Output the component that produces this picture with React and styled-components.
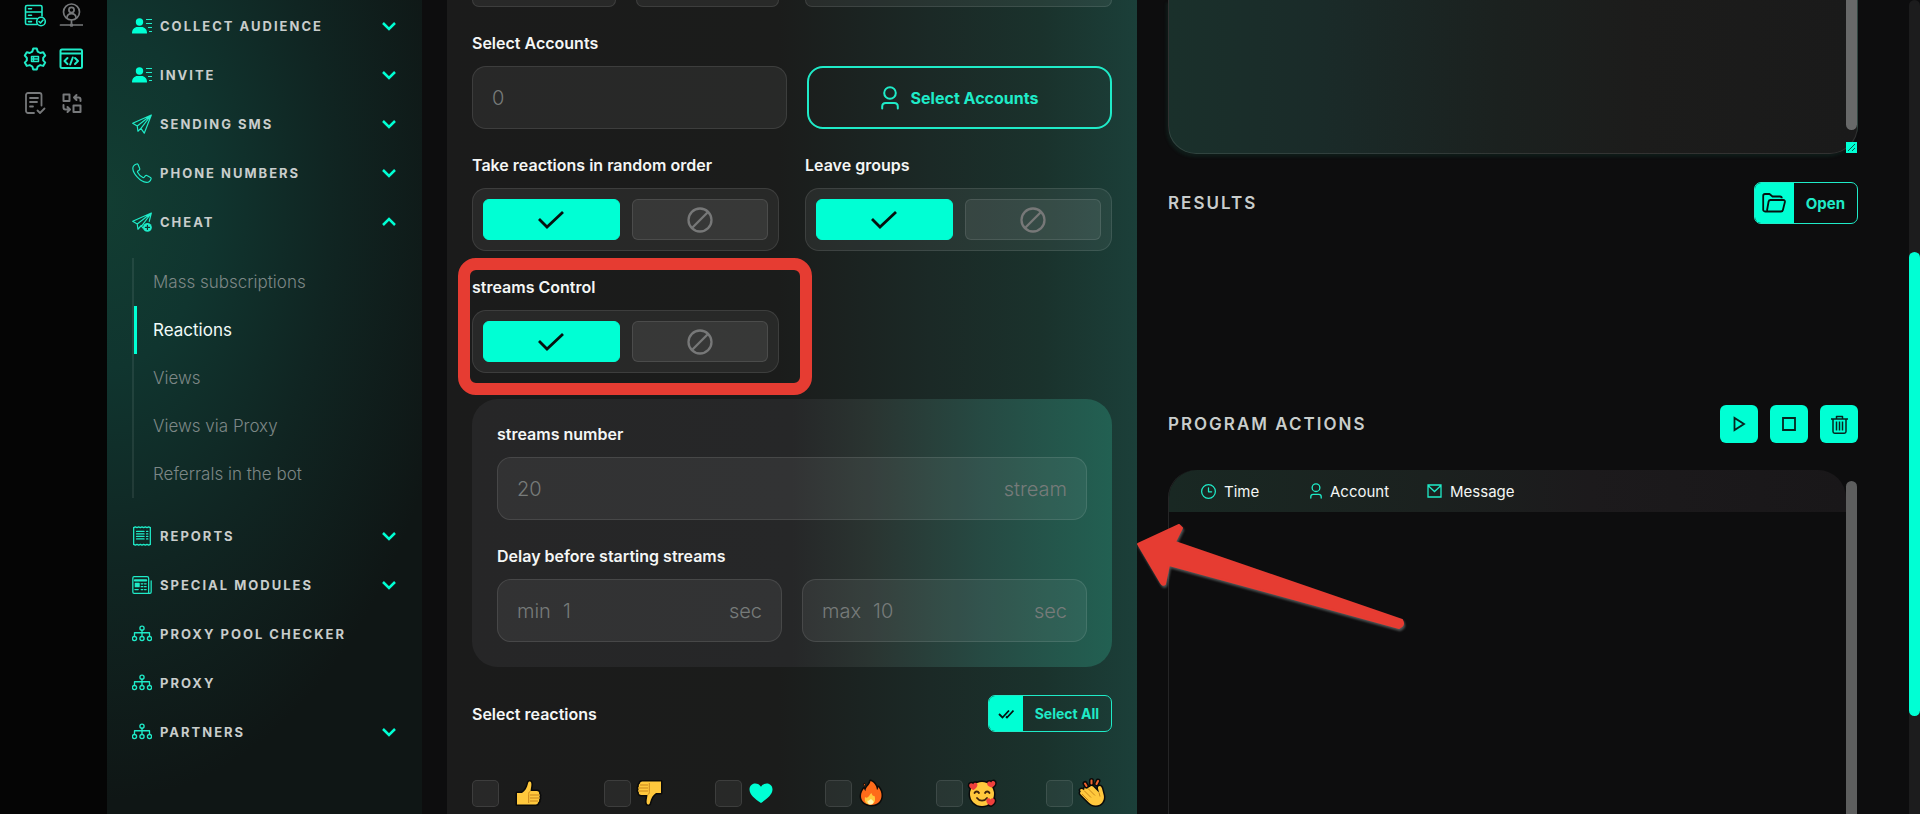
import styled, { createGlobalStyle, ThemeProvider } from 'styled-components';

const theme = {
  colors: {
    page: '#0d0d0e',
    rail: '#050505',
    accent: '#00ffd4',
    accentLine: '#1febc8',
    text: '#f4f6f5',
    heading: '#c9cdcc',
    muted: '#777b7a',
    mark: '#e63c32',
    line: 'rgba(255, 255, 255, 0.1)',
    field: 'rgba(255, 255, 255, 0.06)',
  },
};

const GlobalStyle = createGlobalStyle`
  *, *::before, *::after { box-sizing: border-box; }

  body {
    margin: 0;
    overflow: hidden;
    background: ${theme.colors.page};
    color: ${theme.colors.text};
    font-family: Inter, 'Liberation Sans', sans-serif;
    font-size: 16px;
  }

  button, input, textarea { font: inherit; color: inherit; margin: 0; }
  a { color: inherit; text-decoration: none; }
  svg { display: block; flex: none; }
`;

const Page = styled.div`
  display: grid;
  grid-template-columns: 107px 315px minmax(0, 1fr) 11px;
  height: 100vh;
  overflow: hidden;
`;

/* Icon rail */

const Rail = styled.nav`
  display: grid;
  grid-template-columns: 24px 24px;
  grid-auto-rows: 24px;
  gap: 20px 12px;
  padding: 3px 0 0 23px;
  background: ${({ theme }) => theme.colors.rail};
`;

const RailLink = styled.a`
  color: ${({ theme, $active }) => ($active ? theme.colors.accentLine : '#77797b')};
`;

/* Sidebar */

const Sidebar = styled.nav`
  overflow: hidden;
  padding: 1px 25px 0;
  background: radial-gradient(ellipse 360px 600px at 0 200px, #123d32 0%, #10352f 28%, #102522 62%, #0f1615 100%);
`;

const MenuItem = styled.a`
  display: flex;
  align-items: center;
  gap: 8px;
  height: 49px;
  color: ${({ theme }) => theme.colors.heading};
  font-size: 13px;
  font-weight: 700;
  letter-spacing: 2px;
  text-transform: uppercase;

  svg { color: ${({ theme }) => theme.colors.accentLine}; }
  svg:last-child { margin-left: auto; margin-right: 1px; }
`;

const SubMenu = styled.div`
  margin: 12px 0 13px;
  border-left: 2px solid rgba(255, 255, 255, 0.08);
`;

const SubItem = styled.a`
  display: flex;
  align-items: center;
  height: 48px;
  padding-left: 16px;
  border-left: 3px solid ${({ theme, $active }) => ($active ? theme.colors.accent : 'transparent')};
  color: ${({ $active }) => ($active ? '#f2fbf9' : '#7d8786')};
  font-size: 17px;
  font-weight: ${({ $active }) => ($active ? 400 : 300)};
`;

/* Working area */

const Workspace = styled.main`
  display: grid;
  grid-template-columns: minmax(0, 1fr) minmax(0, 1fr);
  gap: 31px;
  min-height: 0;
  padding: 0 51px 0 25px;
`;

const Settings = styled.form`
  min-width: 0;
  padding: 0 25px;
  background: linear-gradient(90deg, #1b1b1b 0%, #1b1c1b 48%, #1b2926 70%, #1a322c 86%, #1b3f39 100%);
`;

const Row = styled.div`
  display: grid;
  grid-template-columns: ${({ $columns }) => $columns};
  gap: ${({ $gap }) => $gap}px;
  align-items: end;
  margin-bottom: 26px;

  &:last-child { margin-bottom: 0; }
`;

const CutPair = styled.div`
  display: grid;
  grid-template-columns: 1fr 1fr;
  gap: 20px;
`;

const CutBox = styled.div`
  height: 7px;
  border: 1px solid ${({ theme }) => theme.colors.line};
  border-top: 0;
  border-radius: 0 0 14px 14px;
  background: ${({ theme }) => theme.colors.field};
`;

const Field = styled.div`
  display: grid;
  gap: 13px;
  min-width: 0;
`;

const Label = styled.label`
  font-size: 16px;
  font-weight: 600;
  line-height: 20px;
`;

const InputBox = styled.div`
  display: flex;
  align-items: center;
  gap: 12px;
  height: 63px;
  padding: 0 19px;
  border: 1px solid ${({ theme }) => theme.colors.line};
  border-radius: 14px;
  background: ${({ theme }) => theme.colors.field};
  color: ${({ theme }) => theme.colors.muted};
  font-size: 20px;
  font-weight: 300;
`;

const Input = styled.input`
  flex: 1;
  width: 0;
  min-width: 0;
  padding: 0;
  border: 0;
  outline: 0;
  background: none;
`;

const OutlineButton = styled.button`
  display: flex;
  align-items: center;
  justify-content: center;
  gap: 12px;
  height: 63px;
  border: 2px solid ${({ theme }) => theme.colors.accentLine};
  border-radius: 16px;
  background: none;
  color: ${({ theme }) => theme.colors.accentLine};
  font-size: 16px;
  font-weight: 700;
`;

const Switch = styled.div`
  display: grid;
  grid-template-columns: 1fr 1fr;
  gap: 12px;
  height: 63px;
  padding: 10px;
  border: 1px solid ${({ theme }) => theme.colors.line};
  border-radius: 14px;
  background: ${({ theme }) => theme.colors.field};
`;

const Option = styled.label`
  display: grid;
  place-items: center;
  color: #777878;

  > * { grid-area: 1 / 1; }

  input {
    width: 100%;
    height: 100%;
    appearance: none;
    border: 1px solid ${({ theme }) => theme.colors.line};
    border-radius: 6px;
    background: rgba(255, 255, 255, 0.07);
  }

  input:checked {
    border-color: ${({ theme }) => theme.colors.accent};
    background: ${({ theme }) => theme.colors.accent};
  }

  input:checked + svg { color: #06110f; }
`;

const Highlight = styled.div`
  position: relative;

  &::after {
    content: '';
    position: absolute;
    inset: -19px -33px -22px -14px;
    border: 12px solid ${({ theme }) => theme.colors.mark};
    border-radius: 18px;
    pointer-events: none;
  }
`;

const StreamCard = styled.section`
  padding: 25px;
  border-radius: 26px;
  background: linear-gradient(90deg, #262627 0%, #262728 50%, #2a3431 62%, #264a43 80%, #226052 100%);
`;

const ListHead = styled.div`
  display: flex;
  align-items: center;
  justify-content: space-between;
  margin: 28px 0 46px;
`;

const SplitButton = styled.button`
  display: flex;
  align-items: stretch;
  height: ${({ $large }) => ($large ? 42 : 37)}px;
  padding: 0;
  overflow: hidden;
  border: 1px solid ${({ theme }) => theme.colors.accentLine};
  border-radius: 7px;
  background: none;
  color: ${({ theme }) => theme.colors.accentLine};
  font-size: ${({ $large }) => ($large ? 15 : 14)}px;
  font-weight: 700;

  span { padding: 0 12px; align-self: center; }
`;

const SplitIcon = styled.i`
  display: grid;
  place-items: center;
  width: ${({ $large }) => ($large ? 39 : 34)}px;
  background: ${({ theme }) => theme.colors.accent};
  color: #06110f;
`;

const Reactions = styled.div`
  display: flex;
  justify-content: space-between;
`;

const Reaction = styled.label`
  display: flex;
  align-items: center;
  gap: ${({ $wide }) => ($wide ? 13 : 3)}px;
  width: ${({ $wide }) => ($wide ? 88 : 66)}px;
`;

const Checkbox = styled.input`
  width: 27px;
  height: 27px;
  appearance: none;
  border: 1px solid ${({ theme }) => theme.colors.line};
  border-radius: 5px;
  background: ${({ theme }) => theme.colors.field};
`;

/* Output column */

const Output = styled.div`
  display: flex;
  flex-direction: column;
  min-width: 0;
  min-height: 0;
`;

const Console = styled.div`
  position: relative;
  height: 154px;
`;

const ConsoleText = styled.textarea`
  display: block;
  width: 100%;
  height: 100%;
  resize: none;
  outline: 0;
  border: 1px solid ${({ theme }) => theme.colors.line};
  border-top: 0;
  border-radius: 0 0 28px 28px;
  background: linear-gradient(90deg, #1a302b 0%, #1a2b29 22%, #1b211f 48%, #1c1c1b 68%, #1a1a1a 100%);
  box-shadow: -2px 3px 3px rgba(20, 60, 50, 0.3);
`;

const ConsoleThumb = styled.div`
  position: absolute;
  top: 0;
  right: 1px;
  width: 11px;
  height: 130px;
  border-radius: 0 0 6px 6px;
  background: #686969;
`;

const Resizer = styled.div`
  position: absolute;
  right: 1px;
  bottom: 1px;
  display: grid;
  place-items: center;
  width: 11px;
  height: 11px;
  background: ${({ theme }) => theme.colors.accent};
  color: #0a5a4c;
`;

const SectionHead = styled.header`
  display: flex;
  align-items: center;
  justify-content: space-between;
  height: 42px;
  margin-top: ${({ $top }) => $top}px;
`;

const Title = styled.h2`
  margin: 0;
  color: ${({ theme }) => theme.colors.heading};
  font-size: 17px;
  font-weight: 600;
  letter-spacing: 2px;
  text-transform: uppercase;
`;

const Tools = styled.div`
  display: flex;
  gap: 12px;
`;

const ToolButton = styled.button`
  display: grid;
  place-items: center;
  width: 38px;
  height: 38px;
  padding: 0;
  border: 0;
  border-radius: 6px;
  background: ${({ theme }) => theme.colors.accent};
  color: #06251f;
`;

const Log = styled.div`
  display: flex;
  flex: 1;
  align-items: flex-start;
  margin-top: 25px;
  border-left: 1px solid ${({ theme }) => theme.colors.line};
  border-radius: 28px 0 0 0;
`;

const Table = styled.table`
  flex: 1;
  overflow: hidden;
  border-collapse: collapse;
  border-radius: 28px 28px 0 0;
  background: linear-gradient(90deg, #192823 0%, #1b211f 38%, #1c1a1c 62%, #191719 100%);
`;

const HeadCell = styled.th`
  width: ${({ $width }) => ($width ? `${$width}px` : 'auto')};
  height: 42px;
  padding: 0 0 0 ${({ $inset }) => ($inset ? 32 : 0)}px;
  font-size: 15px;
  font-weight: 400;

  > span {
    display: flex;
    align-items: center;
    gap: 8px;
  }

  svg { color: ${({ theme }) => theme.colors.accentLine}; }
`;

const LogThumb = styled.div`
  align-self: stretch;
  width: 11px;
  margin: 11px 1px 0 0;
  border-radius: 6px 6px 0 0;
  background: #5d5e5e;
`;

const PageTrack = styled.div`
  border-radius: 6px 6px 0 0;
  background: #1c1c1d;
`;

const PageThumb = styled.div`
  height: 57vh;
  margin-top: 31vh;
  border-radius: 6px;
  background: ${({ theme }) => theme.colors.accent};
`;

const PointerAnchor = styled.div`
  position: relative;
`;

const Pointer = styled.svg`
  position: absolute;
  top: 125px;
  left: 665px;
  filter: drop-shadow(1px 2px 1px rgba(150, 160, 160, 0.5));
`;

/* Icons */

const Line = ({ size = 20, width = 1.6, children }) => (
  <svg
    width={size}
    height={size}
    viewBox="0 0 24 24"
    fill="none"
    stroke="currentColor"
    strokeWidth={width}
    strokeLinecap="round"
    strokeLinejoin="round"
    aria-hidden="true"
  >
    {children}
  </svg>
);

const ServerIcon = () => (
  <Line size={24}>
    <path d="M14 21.5H4A1.5 1.5 0 0 1 2.5 20V4A1.5 1.5 0 0 1 4 2.5h13.500A1.5 1.5 0 0 1 19 4v9M2.5 9H19M2.5 15.500H14M5.500 5.800h3M5.500 12.200h3M5.500 18.600h3" />
    <circle cx="18" cy="18.5" r="4.3" />
    <path d="m16 18.500 1.500 1.500 2.600-3" />
  </Line>
);

const UserNodeIcon = () => (
  <Line size={24} width={1.7}>
    <circle cx="12.5" cy="9" r="8" />
    <circle cx="12.5" cy="7" r="2.6" />
    <path d="M8 14.500c.3-2.600 2-3.800 4.500-3.800s4.200 1.200 4.500 3.800M12.500 17v3M1.500 22h9M14.500 22H24" />
    <circle cx="12.5" cy="22" r="1" />
  </Line>
);

const GearIcon = () => (
  <Line size={24} width={2}>
    <path d="M10.200 1.600h3.600l.9 3 2.500 1.400 3-.8 2 3.300-2 2.300v2.600l2 2.200-2 3.300-3-.8-2.500 1.400-.9 3h-3.600l-.9-3-2.500-1.400-3 .8-2-3.300 2-2.200v-2.600l-2-2.300 2-3.300 3 .8L9.300 4.600z" />
    <path d="M8.500 9.500h7v5h-7zM8.500 12h7M10.500 9.500v5" strokeWidth="1.5" />
  </Line>
);

const CodeIcon = () => (
  <Line size={24} width={2}>
    <rect x="1.500" y="2.500" width="21.500" height="18.500" rx="1.500" />
    <path d="M2 6.500h21M8.500 11l-3 3 3 3M16 11l3 3-3 3M13.800 10.500l-2.600 7" />
  </Line>
);

const NoteCheckIcon = () => (
  <Line size={24} width={1.8}>
    <path d="M11 22H5a2 2 0 0 1-2-2V4a2 2 0 0 1 2-2h11.500a2 2 0 0 1 2 2v10.500M7 7h8M7 11h7M7 15.500h3M14.500 19.500l2.500 2.500 4.500-4.500" />
  </Line>
);

const SwapIcon = () => (
  <Line size={24} width={2}>
    <path d="M4.500 3.500h6v6.500h-6zM14.500 14.500h7V21h-7zM21.500 10V8.500a2 2 0 0 0-2-2H15M17.500 4 15 6.500 17.500 9M4.500 14v2.500a2 2 0 0 0 2 2h4M8.500 16l2.500 2.500L8.500 21" />
  </Line>
);

const AudienceIcon = () => (
  <svg width="20" height="20" viewBox="0 0 20 20" fill="currentColor" aria-hidden="true">
    <circle cx="7.5" cy="6" r="3.7" fill="#00ffd4" />
    <path d="M0 17c0-3.500 2.500-6 5.500-6h4c3 0 5.500 2.500 5.500 6 0 .4-.2.6-.6.6H.6c-.4 0-.6-.2-.6-.6z" fill="#00ffd4" />
    <path d="M14 3h6v1h-6zM14 7h6v1h-6zM16 11h4v1h-4zM17 15h3v1h-3z" />
  </svg>
);

const SendIcon = () => (
  <Line width={1.4}>
    <path d="M23.200 1.200.8 11.200l5.500 3.300zM23.200 1.200 6.300 14.500l.8 6.200 3.600-3.500zM23.200 1.200 10.700 17.200l4 5.800z" />
  </Line>
);

const SendPlusIcon = () => (
  <Line width={1.4}>
    <path d="M23.200 1.200.8 11.200l5.500 3.300zM23.200 1.200 6.300 14.500l.8 6.200 4-4.500M23.200 1.200l-2.500 10M23.200 1.200 11.500 17l1.500 2" />
    <circle cx="18.5" cy="18.5" r="5.3" fill="currentColor" stroke="none" />
    <path d="M18.500 16v5M16 18.500h5" stroke="#10332d" />
  </Line>
);

const PhoneIcon = () => (
  <Line width={1.4}>
    <path d="M5.500 1.200c-2.500.8-4.500 2.600-4.500 5.300C1.200 12 9 22.500 17.500 23.200c2.500 0 4.700-1.700 5.400-4.200.2-.7-.1-1.300-.7-1.700l-4.300-2.200c-.7-.4-1.500-.2-2 .4l-1.200 1.600c-.4.5-1 .7-1.600.4-2.700-1.300-5-3.600-6.400-6.300-.3-.6-.1-1.200.4-1.600l1.600-1.200c.6-.5.8-1.300.4-2L7.300 1.800c-.4-.6-1.100-.9-1.800-.6z" />
  </Line>
);

const ReportIcon = () => (
  <Line width={1.5}>
    <path d="M2 2v20M22 2v20" />
    <path d="m2 2 2-1 2 1 2-1 2 1 2-1 2 1 2-1 2 1 2-1 2 1M2 22l2 1 2-1 2 1 2-1 2 1 2-1 2 1 2-1 2 1 2-1" />
    <path d="M5.500 6.500h9M5.500 9.500h9M5.500 12.500h9M5.500 15.500h9M17.500 6.500H19M17.500 9.500H19M17.500 12.500H19M17.500 15.500H19" />
  </Line>
);

const NewsIcon = () => (
  <Line width={1.5}>
    <path d="M20 22H2.500A1.500 1.500 0 0 1 1 20.500v-17A1.500 1.500 0 0 1 2.500 2H18a2 2 0 0 1 2 2zM20 22h1.500a1.500 1.500 0 0 0 1.500-1.500V7" />
    <path d="M3.500 6.500H17" strokeWidth="2.6" />
    <path d="M4 10h4.500v4H4z" fill="currentColor" />
    <path d="M11 10.500h2M15 10.500h2M11 14h2M15 14h2M3.500 17.500h4M11 17.500h2M15 17.500h2" />
  </Line>
);

const TreeIcon = () => (
  <Line>
    <circle cx="12" cy="5" r="2.5" />
    <circle cx="3" cy="17.5" r="2.5" />
    <circle cx="12" cy="17.5" r="2.5" />
    <circle cx="21" cy="17.5" r="2.5" />
    <path d="M12 7.500V15M3 14v-3.500h18V14" />
  </Line>
);

const Chevron = ({ up }) => (
  <svg width="14" height="10" viewBox="0 0 14 10" fill="none" stroke="#00ffd4" strokeWidth="2.5" aria-hidden="true">
    <path d={up ? 'm1 8 6-6 6 6' : 'm1 2 6 6 6-6'} />
  </svg>
);

const PersonIcon = ({ width, height }) => (
  <svg width={width} height={height} viewBox="0 0 18 24" fill="none" stroke="currentColor" strokeWidth="2" strokeLinecap="round" aria-hidden="true">
    <circle cx="9" cy="7" r="5.8" />
    <path d="M1.200 22.500V20.500c0-2 1.500-3.500 3.500-3.500h8.600c2 0 3.500 1.500 3.500 3.500v2" />
  </svg>
);

const CheckIcon = () => (
  <svg width="26" height="20" viewBox="0 0 26 20" fill="none" stroke="currentColor" strokeWidth="2.8" aria-hidden="true">
    <path d="m1 9 8 8L25 2" />
  </svg>
);

const BanIcon = () => (
  <svg width="26" height="26" viewBox="0 0 26 26" fill="none" stroke="currentColor" strokeWidth="2.3" aria-hidden="true">
    <circle cx="13" cy="13" r="11.5" />
    <path d="M21 5 5 21" />
  </svg>
);

const DoubleCheckIcon = () => (
  <svg width="16" height="10" viewBox="0 0 16 10" fill="none" stroke="currentColor" strokeWidth="1.8" aria-hidden="true">
    <path d="m1 5 3.500 3.500L11 1.500M8 7.500l1 1 6.500-7" />
  </svg>
);

const FolderIcon = () => (
  <svg width="24" height="20" viewBox="0 0 24 20" fill="none" stroke="currentColor" strokeWidth="1.8" strokeLinejoin="round" aria-hidden="true">
    <path d="M4 18.500H3a1.800 1.800 0 0 1-1.800-1.800V2.800C1.200 1.800 2 1 3 1h4.500l3 2.500H18c1 0 1.800.8 1.800 1.800M4 18.500h15c1 0 1.700-.6 1.900-1.500l2-8c.2-1-.5-2-1.600-2H8.500c-.9 0-1.700.6-1.900 1.500L5 17.500c-.2.6-.5 1-1 1z" />
  </svg>
);

const PlayIcon = () => (
  <svg width="14" height="16" viewBox="0 0 14 16" fill="none" stroke="currentColor" strokeWidth="1.8" aria-hidden="true">
    <path d="M2.500 2v12L12 8z" />
  </svg>
);

const StopIcon = () => (
  <svg width="14" height="14" viewBox="0 0 14 14" fill="none" stroke="currentColor" strokeWidth="1.8" aria-hidden="true">
    <path d="M1 1h12v12H1z" />
  </svg>
);

const TrashIcon = () => (
  <svg width="17" height="19" viewBox="0 0 17 19" fill="none" stroke="currentColor" strokeWidth="1.5" strokeLinejoin="round" aria-hidden="true">
    <path d="M0 4h17M5.500 4V1.500h6V4M2 4v12.500c0 1 .6 1.700 1.700 1.700h9.600c1.100 0 1.700-.7 1.700-1.700V4M5.500 6.500v9M8.500 6.500v9M11.500 6.500v9" />
  </svg>
);

const ClockIcon = () => (
  <Line size={15} width={2}>
    <circle cx="12" cy="12" r="11" />
    <path d="M12 6v6.500h5" />
  </Line>
);

const MailIcon = () => (
  <svg width="15" height="14" viewBox="0 0 15 14" fill="none" stroke="currentColor" strokeWidth="1.3" aria-hidden="true">
    <path d="M1 1h13v12H1zM1 1.500l6.500 6L14 1.500" />
  </svg>
);

/* Reaction faces */

const Face = ({ back, children }) => (
  <svg width="32" height="30" viewBox="0 0 32 30" aria-hidden="true">
    {back && <path d={back} fill="#0a0a0a" stroke="#0a0a0a" strokeWidth="3" strokeLinejoin="round" />}
    {children}
  </svg>
);

const THUMB = 'M5 15h5c3-2 5-5 6-9.500.3-1.500.8-2 1.700-2 1.500 0 2 2 1.600 4.500L18.500 13h6c2 0 3 1.300 2.600 2.800.8.700 1 2 .2 3 .7 1 .6 2.200-.3 3 .4 1 0 2.200-1 2.700 0 1.300-1 2-2.300 2H5z';

const ThumbUp = () => (
  <Face back={THUMB}>
    <path d={THUMB} fill="#ffc83d" />
    <path d="M18.500 13c-1.500 1-2 2-1.800 3.500V25M18 17h9M18 20h9M18 23h8" fill="none" stroke="#c9861c" />
  </Face>
);

const ThumbDown = () => (
  <Face>
    <g transform="rotate(180 16 15)">
      <path d={THUMB} fill="#0a0a0a" stroke="#0a0a0a" strokeWidth="3" strokeLinejoin="round" />
      <path d={THUMB} fill="#ffc83d" />
      <path d="M18.500 13c-1.500 1-2 2-1.800 3.500V25M18 17h9M18 20h9M18 23h8" fill="none" stroke="#c9861c" />
    </g>
  </Face>
);

const Heart = () => (
  <Face>
    <path d="M16 25C10 21 4.500 16.500 4.500 11.500c0-3.500 2.500-6 5.700-6 2.400 0 4.600 1.200 5.800 3.300 1.200-2.100 3.400-3.300 5.800-3.300 3.200 0 5.700 2.500 5.700 6C27.500 16.500 22 21 16 25z" fill="#00ffd4" />
  </Face>
);

const FIRE = 'M15.500 3c5 2 6 6 6.500 9 .8-.7 1.200-1.600 1.200-3 2.600 3 3.500 6 3.300 9-.3 5.500-4.300 9-10 9S6 23.500 6 18c0-3.500 1.500-5.500 3-7.500.4 1.200.8 2 1.500 2.500C10.500 8.500 15 7.500 15.500 3z';

const Fire = () => (
  <Face back={FIRE}>
    <path d="M9 5c1.500 1 2 2 1 3.500C8.500 7.500 8.300 6.500 9 5z" fill="#ff6a1c" stroke="#0a0a0a" />
    <path d={FIRE} fill="#ff6b1a" />
    <path d="M10 19c1 1 2 1 3 0 1.500-1 1.500-2.500 3.500-4 .5 2 1.500 3.500 3 3 1.500 4 0 8.500-4 8.500S9 24 10 19z" fill="#ffc83d" />
    <path d="M12.500 22.500c1.500.5 2-.5 3.500-1.500 1.500 1.500 3 2 2.500 3.500-.5 1.200-1.500 2-3 2s-3.500-1.500-3-4z" fill="#fff3b0" />
  </Face>
);

const LOVE_HEARTS = 'M7.500 12C4 10.500 2.500 8 3.500 6.200c1-1.500 2.800-1.300 3.700 0 .7-1.500 2.700-1.900 3.800-.6C12.300 7.300 10.500 10.500 7.500 12zM25.500 9.500c-3.500-1-5-3-4-5 .9-1.500 2.800-1.400 3.700-.1.700-1.400 2.600-1.800 3.700-.5 1.200 1.700-.4 4.300-3.400 5.600zM25 27.500c-4-1-5.500-4-4.200-6.200 1-1.500 2.900-1.200 3.700.3.900-1.500 2.800-1.800 3.900-.4 1.300 2-.4 5-3.400 6.300z';

const Love = () => (
  <Face back={LOVE_HEARTS}>
    <circle cx="16" cy="16" r="13.5" fill="#0a0a0a" />
    <circle cx="16" cy="16" r="12" fill="#ffc83d" />
    <path d="M8.500 15c1-2 3.500-2 4.500 0M19 15c1-2 3.500-2 4.500 0M11 20c2.500 3.500 7.500 3.500 10 0" fill="none" stroke="#40240c" strokeWidth="1.8" strokeLinecap="round" />
    <path d={LOVE_HEARTS} fill="#f0403c" />
  </Face>
);

const CLAP = 'M4 12c1-1.500 2.500-1 3.500 0l1-.8C8 9 10 8 11.500 9.500L14 9c.5-1 2-1.500 3-.5l6 6-1-4c-.3-1.500.5-2.500 1.500-2.500 1.200 0 2 .8 2.500 2.500l1.800 7c1 5-2.500 10-8 10-3 0-5-1-7-3l-8-8c-1-1-1-2 0-3z';

const Clap = () => (
  <Face back={CLAP}>
    <path d={CLAP} fill="#ffc83d" />
    <path d="m8 12.500 7 7M6 16l6.500 6.500M12 10.500l7 7M23 14.500l1 4" fill="none" stroke="#c9861c" />
    <path d="M9 5.500 10.500 8M15.500 2.500v3M22 3l-1.500 3" stroke="#0a0a0a" strokeWidth="5" strokeLinecap="round" />
    <path d="M9 5.500 10.500 8M15.500 2.500v3M22 3l-1.500 3" stroke="#f2622c" strokeWidth="2" strokeLinecap="round" />
  </Face>
);

/* Data */

const railIcons = [
  { name: 'Servers', icon: ServerIcon, active: true },
  { name: 'Account node', icon: UserNodeIcon },
  { name: 'Settings', icon: GearIcon, active: true },
  { name: 'Code', icon: CodeIcon, active: true },
  { name: 'Tasks', icon: NoteCheckIcon },
  { name: 'Exchange', icon: SwapIcon },
];

const menu = [
  { name: 'Collect audience', icon: AudienceIcon, more: true },
  { name: 'Invite', icon: AudienceIcon, more: true },
  { name: 'Sending SMS', icon: SendIcon, more: true },
  { name: 'Phone numbers', icon: PhoneIcon, more: true },
  { name: 'Cheat', icon: SendPlusIcon, more: true, open: true },
];

const cheatItems = ['Mass subscriptions', 'Reactions', 'Views', 'Views via Proxy', 'Referrals in the bot'];

const menuRest = [
  { name: 'Reports', icon: ReportIcon, more: true },
  { name: 'Special modules', icon: NewsIcon, more: true },
  { name: 'Proxy pool checker', icon: TreeIcon },
  { name: 'Proxy', icon: TreeIcon },
  { name: 'Partners', icon: TreeIcon, more: true },
];

const reactions = [
  { name: 'Thumbs up', face: ThumbUp },
  { name: 'Thumbs down', face: ThumbDown },
  { name: 'Heart', face: Heart },
  { name: 'Fire', face: Fire },
  { name: 'Love', face: Love },
  { name: 'Clap', face: Clap },
];

const MenuGroup = ({ items }) =>
  items.map(({ name, icon: Icon, more, open }) => (
    <MenuItem href="#" key={name}>
      <Icon />
      <span>{name}</span>
      {more && <Chevron up={open} />}
    </MenuItem>
  ));

const Toggle = ({ id, label }) => (
  <Field role="radiogroup" aria-labelledby={id}>
    <Label as="span" id={id}>{label}</Label>
    <Switch>
      <Option>
        <input type="radio" name={id} aria-label="On" defaultChecked />
        <CheckIcon />
      </Option>
      <Option>
        <input type="radio" name={id} aria-label="Off" />
        <BanIcon />
      </Option>
    </Switch>
  </Field>
);

export default function App() {
  return (
    <ThemeProvider theme={theme}>
      <GlobalStyle />
      <Page>
        <Rail>
          {railIcons.map(({ name, icon: Icon, active }) => (
            <RailLink href="#" key={name} aria-label={name} $active={active}>
              <Icon />
            </RailLink>
          ))}
        </Rail>

        <Sidebar>
          <MenuGroup items={menu} />
          <SubMenu>
            {cheatItems.map((name) => (
              <SubItem href="#" key={name} $active={name === 'Reactions'}>{name}</SubItem>
            ))}
          </SubMenu>
          <MenuGroup items={menuRest} />
        </Sidebar>

        <Workspace>
          <Settings>
            <Row $columns="1fr 1fr" $gap={26}>
              <CutPair>
                <CutBox />
                <CutBox />
              </CutPair>
              <CutBox />
            </Row>

            <Row $columns="315fr 305fr" $gap={20}>
              <Field>
                <Label htmlFor="accounts">Select Accounts</Label>
                <InputBox>
                  <Input id="accounts" defaultValue="0" />
                </InputBox>
              </Field>
              <OutlineButton type="button">
                <PersonIcon width={18} height={24} />
                Select Accounts
              </OutlineButton>
            </Row>

            <Row $columns="1fr 1fr" $gap={26}>
              <Toggle id="random-order" label="Take reactions in random order" />
              <Toggle id="leave-groups" label="Leave groups" />
            </Row>

            <Row $columns="1fr 1fr" $gap={26}>
              <Highlight>
                <Toggle id="streams-control" label="streams Control" />
              </Highlight>
            </Row>

            <PointerAnchor>
              <StreamCard>
                <Row $columns="1fr" $gap={20}>
                  <Field>
                    <Label htmlFor="streams">streams number</Label>
                    <InputBox>
                      <Input id="streams" defaultValue="20" />
                      <span>stream</span>
                    </InputBox>
                  </Field>
                </Row>
                <Field>
                  <Label htmlFor="delay-min">Delay before starting streams</Label>
                  <Row $columns="1fr 1fr" $gap={20}>
                    <InputBox>
                      <span>min</span>
                      <Input id="delay-min" defaultValue="1" />
                      <span>sec</span>
                    </InputBox>
                    <InputBox>
                      <span>max</span>
                      <Input aria-label="Maximum delay" defaultValue="10" />
                      <span>sec</span>
                    </InputBox>
                  </Row>
                </Field>
              </StreamCard>
              <Pointer width="270" height="110" viewBox="0 0 270 110" aria-hidden="true">
                <path
                  d="M1 20 42 1l3 3-7 14 227 78q3 6-3 8L32 41l-4 19q-2 2-4-1z"
                  fill={theme.colors.mark}
                  stroke={theme.colors.mark}
                  strokeWidth="2"
                  strokeLinejoin="round"
                />
              </Pointer>
            </PointerAnchor>

            <ListHead>
              <Label as="span">Select reactions</Label>
              <SplitButton type="button">
                <SplitIcon><DoubleCheckIcon /></SplitIcon>
                <span>Select All</span>
              </SplitButton>
            </ListHead>

            <Reactions>
              {reactions.map(({ name, face: FaceIcon }, i) => (
                <Reaction key={name} $wide={i === 0}>
                  <Checkbox type="checkbox" aria-label={name} />
                  <FaceIcon />
                </Reaction>
              ))}
            </Reactions>
          </Settings>

          <Output>
            <Console>
              <ConsoleText aria-label="Links" />
              <ConsoleThumb />
              <Resizer>
                <svg width="7" height="7" viewBox="0 0 7 7" stroke="currentColor" aria-hidden="true">
                  <path d="M0 7 7 0M4 7l3-3" />
                </svg>
              </Resizer>
            </Console>

            <SectionHead $top={28}>
              <Title>Results</Title>
              <SplitButton type="button" $large>
                <SplitIcon $large><FolderIcon /></SplitIcon>
                <span>Open</span>
              </SplitButton>
            </SectionHead>

            <SectionHead $top={179}>
              <Title>Program actions</Title>
              <Tools>
                <ToolButton type="button" aria-label="Start"><PlayIcon /></ToolButton>
                <ToolButton type="button" aria-label="Stop"><StopIcon /></ToolButton>
                <ToolButton type="button" aria-label="Clear"><TrashIcon /></ToolButton>
              </Tools>
            </SectionHead>

            <Log>
              <Table>
                <thead>
                  <tr>
                    <HeadCell $width={141} $inset><span><ClockIcon />Time</span></HeadCell>
                    <HeadCell $width={117}><span><PersonIcon width={12} height={16} />Account</span></HeadCell>
                    <HeadCell><span><MailIcon />Message</span></HeadCell>
                  </tr>
                </thead>
              </Table>
              <LogThumb />
            </Log>
          </Output>
        </Workspace>

        <PageTrack>
          <PageThumb />
        </PageTrack>
      </Page>
    </ThemeProvider>
  );
}
